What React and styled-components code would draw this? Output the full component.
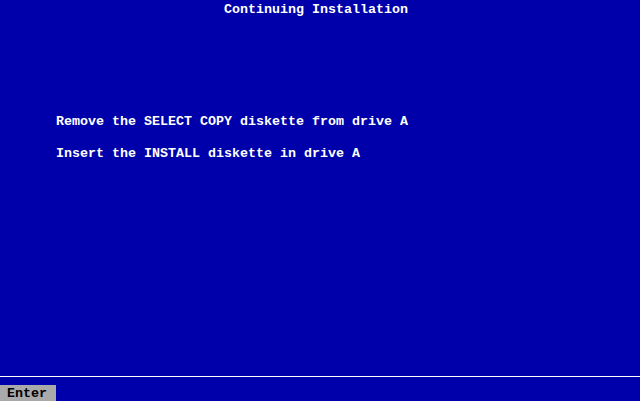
import React from "react";
import styled, { createGlobalStyle } from "styled-components";

const GlobalStyle = createGlobalStyle`
	html, body {
		margin: 0;
		padding: 0;
		background: #0000aa;
	}
`;

const Screen = styled.div`
	width: 640px;
	height: 401px;
	background: #0000aa;
	color: #ffffff;
	font-family: "Liberation Mono", "DejaVu Sans Mono", monospace;
	font-weight: 700;
	font-size: 13.33px;
	line-height: 16px;
	display: flex;
	flex-direction: column;
	overflow: hidden;
	white-space: pre;
`;

// one text-mode row: 16px tall, glyphs sit a bit low like the VGA font
const Row = styled.div`
	height: 16px;
	box-sizing: border-box;
	padding-top: 2px;
	padding-left: ${(props) => props.col * 8}px;
`;

const Body = styled.div`
	flex: 1;
	padding-top: 96px;
	display: flex;
	flex-direction: column;
	gap: 16px;
`;

const Footer = styled.div`
	border-top: 1px solid #ffffff;
	padding-top: 8px;
	height: 16px;
	display: flex;
`;

const KeyLabel = styled.div`
	width: 56px;
	height: 16px;
	box-sizing: border-box;
	padding: 1px 0 0 7px;
	background: #aaaaaa;
	color: #000000;
`;

export default function App() {
	return (
		<>
			<GlobalStyle />
			<Screen>
				<Row col={28}>Continuing Installation</Row>
				<Body>
					<Row col={7}>Remove the SELECT COPY diskette from drive A</Row>
					<Row col={7}>Insert the INSTALL diskette in drive A</Row>
				</Body>
				<Footer>
					<KeyLabel>Enter</KeyLabel>
				</Footer>
			</Screen>
		</>
	);
}
